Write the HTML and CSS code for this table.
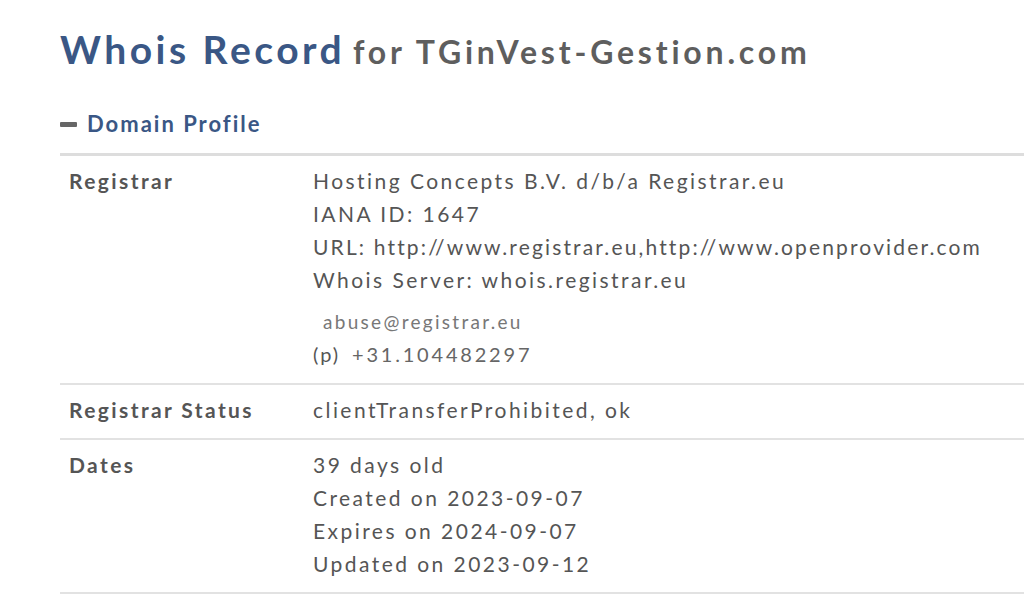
FILE: index.html
```html
<!DOCTYPE html>
<html>
<head>
<meta charset="utf-8">
<link rel="stylesheet" href="styles.css">
</head>
<body>
<div class="page">
  <h1 class="title"><span class="title-main">Whois Record</span> <span class="title-sub">for TGinVest-Gestion.com</span></h1>
  <h2 class="section-head"><span class="dash"></span>Domain Profile</h2>
  <div class="table">
    <div class="row">
      <div class="label">Registrar</div>
      <div class="value">
        <div>Hosting Concepts B.V. d/b/a Registrar.eu</div>
        <div>IANA ID: 1647</div>
        <div class="url">URL: http://www.registrar.eu,http://www.openprovider.com</div>
        <div>Whois Server: whois.registrar.eu</div>
        <div class="email">abuse@registrar.eu</div>
        <div class="phone"><span class="p">(p)</span><span class="num">+31.104482297</span></div>
      </div>
    </div>
    <div class="row">
      <div class="label">Registrar Status</div>
      <div class="value"><div>clientTransferProhibited, ok</div></div>
    </div>
    <div class="row">
      <div class="label">Dates</div>
      <div class="value">
        <div>39 days old</div>
        <div>Created on 2023-09-07</div>
        <div>Expires on 2024-09-07</div>
        <div>Updated on 2023-09-12</div>
      </div>
    </div>
  </div>
</div>
</body>
</html>
```

FILE: styles.css
```css
html, body {
  margin: 0;
  padding: 0;
  background: #ffffff;
  overflow: hidden;
}
body {
  font-family: Lato, "Open Sans", sans-serif;
  color: #555555;
}
.page {
  padding: 21px 0 0 60px;
}
.title {
  margin: 0;
  font-weight: 700;
  line-height: 56px;
  white-space: nowrap;
}
.title-main {
  font-size: 39px;
  color: #3a5785;
  letter-spacing: 3.5px;
}
.title-sub {
  font-size: 32px;
  color: #5e5e5e;
  letter-spacing: 3.8px;
}
.section-head {
  margin: 28px 0 0 0;
  font-size: 22px;
  font-weight: 700;
  color: #3a5785;
  letter-spacing: 2px;
  line-height: 32px;
  display: flex;
  align-items: center;
}
.dash {
  display: inline-block;
  width: 17px;
  height: 5px;
  background: #666;
  margin-right: 10px;
  border-radius: 1px;
}
.table {
  margin-top: 13px;
  border-top: 3px solid #dddddd;
}
.row {
  display: flex;
  border-bottom: 2px solid #e2e2e2;
  padding: 8px 0 12px 0;
}
.label {
  width: 244px;
  padding-left: 9px;
  font-size: 21px;
  font-weight: 700;
  letter-spacing: 2.4px;
  line-height: 33px;
  color: #555;
  flex: none;
}
.value {
  font-size: 21px;
  letter-spacing: 2.45px;
  line-height: 33px;
  color: #555;
  white-space: nowrap;
}
.url {
  letter-spacing: 2.15px;
}
.email {
  font-size: 19px;
  letter-spacing: 2.3px;
  color: #777;
  padding-left: 10px;
  margin-top: 9px;
}
.phone {
  display: flex;
  align-items: baseline;
}
.phone .p {
  font-size: 20px;
  letter-spacing: 2px;
  width: 39px;
}
.phone .num {
  font-size: 20px;
  letter-spacing: 2.8px;
  color: #666;
}
```
